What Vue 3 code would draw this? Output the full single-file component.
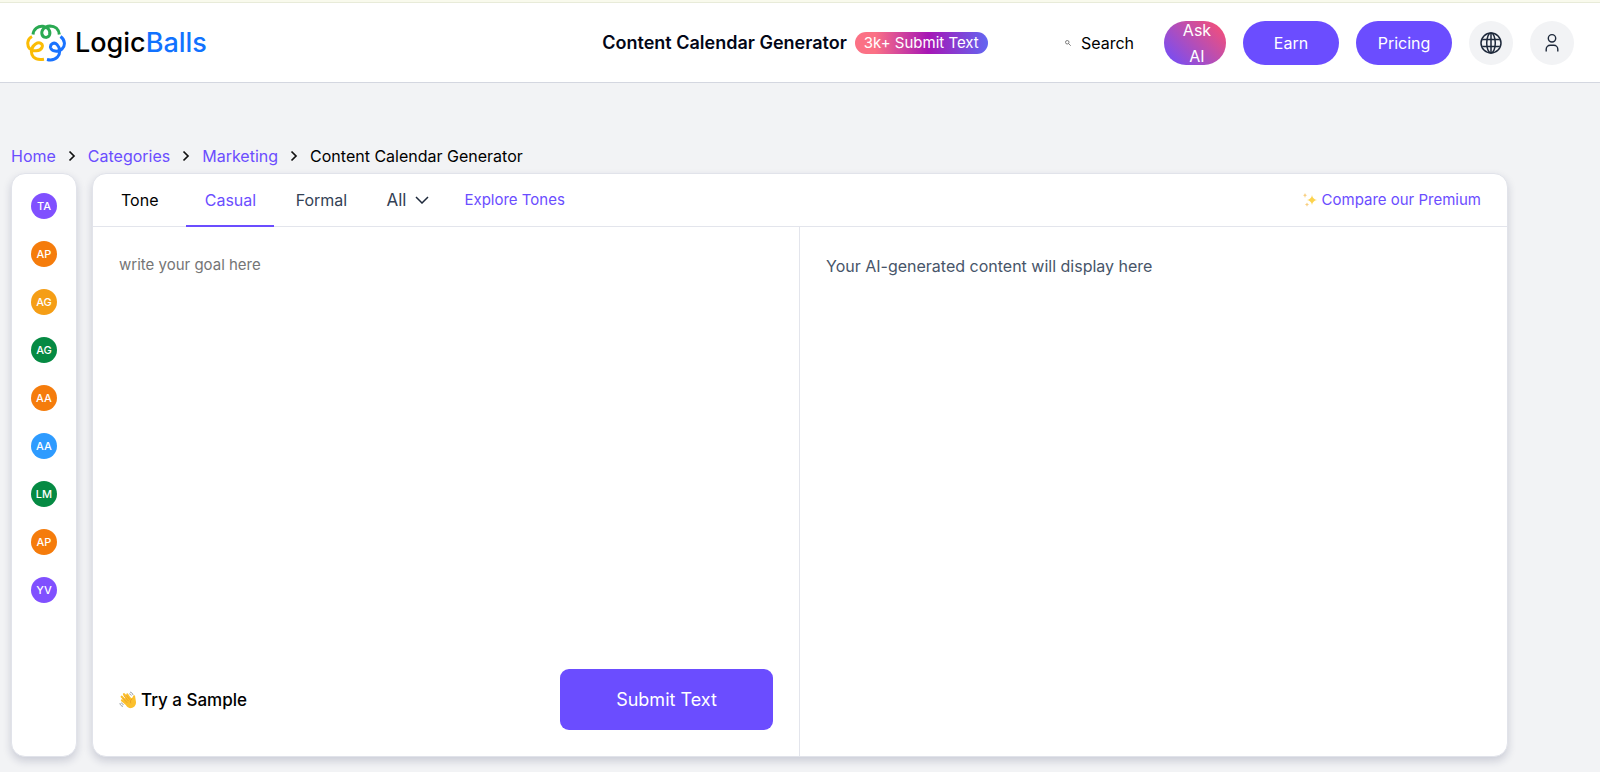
<script setup>
import { ref } from 'vue'

const crumbs = ['Home', 'Categories', 'Marketing']
const tools = [
  { code: 'TA', tint: 'violet' },
  { code: 'AP', tint: 'orange' },
  { code: 'AG', tint: 'amber' },
  { code: 'AG', tint: 'green' },
  { code: 'AA', tint: 'orange' },
  { code: 'AA', tint: 'blue' },
  { code: 'LM', tint: 'green' },
  { code: 'AP', tint: 'orange' },
  { code: 'YV', tint: 'violet' },
]
const tone = ref('Casual')
const goal = ref('')
</script>

<template>
  <div class="page">
    <div class="strip"></div>
    <header class="topbar">
      <a class="logo" href="#">
        <svg width="40" height="38" viewBox="0 0 40 38" fill="none" stroke-width="3" stroke-linecap="butt">
          <path stroke="#2aa952" d="M7 10.500C7.500 5 12 1.800 17 2.300C22 3 25 7 23.500 11C22 14.500 17 14 16 10.500C15 6.500 18 2.300 24 2C29 2 32.800 5 33.300 10.500" />
          <path stroke="#fbbc05" d="M6 12.500C1 15 .800 21 3.500 24.500C7 28 14 27.500 16 23.500C17.500 19.500 13.500 17.500 9.500 20C5 23 4 29 7.500 33C10 35.600 14 36 18 35.200" />
          <path stroke="#1a73ff" d="M34.500 12.500C39.300 16 39.500 22 36 25C32 28.500 25.500 27.500 24.500 23.500C24 20 28 17.500 31 20.500C34.500 24 34.500 30 31.500 33C29 35.700 25 36.500 21 35.500" />
        </svg>
        <span class="wordmark">Logic<span>Balls</span></span>
      </a>

      <div class="heading">
        <h1>Content Calendar Generator</h1>
        <span class="badge">3k+ Submit Text</span>
      </div>

      <nav class="actions">
        <button class="search" type="button">
          <svg width="6" height="6" viewBox="0 0 12 12" fill="none" stroke="#555" stroke-width="1.500">
            <circle cx="4.500" cy="4.500" r="3.500" />
            <path d="M7 7l4.500 4.500" />
          </svg>
          Search
        </button>
        <button class="pill ask" type="button">Ask AI</button>
        <button class="pill" type="button">Earn</button>
        <button class="pill" type="button">Pricing</button>
        <button class="round" type="button" aria-label="Language">
          <svg width="22" height="22" viewBox="0 0 22 22" fill="none" stroke="#1e293b" stroke-width="1.500">
            <circle cx="11" cy="11" r="10" />
            <ellipse cx="11" cy="11" rx="4.300" ry="10" />
            <path d="M11 1v20M2.200 7.500h17.600M2.200 14.500h17.600" />
          </svg>
        </button>
        <button class="round" type="button" aria-label="Account">
          <svg width="22" height="22" viewBox="0 0 22 22" fill="none" stroke="#1e293b" stroke-width="1.400">
            <circle cx="11" cy="6.300" r="3.700" />
            <path d="M5.200 19.500v-2.300a4 4 0 0 1 4-4h3.600a4 4 0 0 1 4 4v2.300" />
          </svg>
        </button>
      </nav>
    </header>

    <main class="content">
      <nav class="crumbs" aria-label="Breadcrumb">
        <template v-for="c in crumbs" :key="c">
          <a href="#">{{ c }}</a>
          <svg width="8" height="12" viewBox="0 0 8 12" fill="none" stroke="#111" stroke-width="1.700">
            <path d="M1.500 1.500L6 6l-4.500 4.500" />
          </svg>
        </template>
        <span>Content Calendar Generator</span>
      </nav>

      <div class="workspace">
        <aside class="card rail">
          <a v-for="(t, i) in tools" :key="i" href="#" :class="['avatar', t.tint]">{{ t.code }}</a>
        </aside>

        <section class="card panel">
          <div class="tones">
            <span class="label">Tone</span>
            <button
              v-for="t in ['Casual', 'Formal']"
              :key="t"
              type="button"
              :class="['tab', { active: tone === t }]"
              @click="tone = t"
            >{{ t }}</button>
            <label class="all">
              <select aria-label="All tones"><option>All</option></select>
              <svg width="14" height="8" viewBox="0 0 14 8" fill="none" stroke="#1e293b" stroke-width="1.500">
                <path d="M1 1l6 6 6-6" />
              </svg>
            </label>
            <a class="explore" href="#">Explore Tones</a>
            <a class="premium" href="#">
              <svg width="14" height="14" viewBox="0 0 14 14" fill="#fcd34d">
                <path d="M9 2q.6 4.200 5 5-4.400.8-5 5-.6-4.200-5-5 4.400-.8 5-5z" />
                <path fill="#f8cf80" d="M2 0q.3 2 2 2.300Q2.300 2.600 2 5 1.700 2.600 0 2.300 1.700 2 2 0zM4 9.500q.3 1.700 2 2-1.700.3-2 2.200-.3-1.900-2-2.200 1.700-.3 2-2z" />
              </svg>
              Compare our Premium
            </a>
          </div>

          <div class="panes">
            <form class="pane input" @submit.prevent>
              <textarea v-model="goal" aria-label="Goal" placeholder="write your goal here"></textarea>
              <div class="foot">
                <button class="sample" type="button">
                  <svg width="18" height="18" viewBox="0 0 18 18" fill="none" stroke-linecap="round">
                    <path fill="#fbc02d" d="M4.500 8.500L9 5.500l4 1.800 1.300-2.600c1-.9 2 0 1.900 1.200l.8 5.100c.2 3-1.800 5.600-4.600 6.100-2 .4-3.600-.5-4.700-1.800z" />
                    <path stroke="#fbc02d" stroke-width="2.200" d="M8.500 14L3 9.300M9 12L2.700 5.700M10.500 10L5 3.200M12 9L8.300 3.500" />
                    <path stroke="#e08f1c" stroke-width=".6" d="M8 11.500L4 7.300M9.300 9.800L5 5M10.700 8.500L7.200 4M13 8c-1.800 1.300-2 2.700-1.300 4" />
                    <path stroke="#8a9197" stroke-width=".9" d="M11.500 1.200c1.300.3 2.100 1.200 2.400 2.400M10.700 2.900c.8.200 1.200.6 1.500 1.300M1 12.500c.2 1.500 1.200 2.500 2.600 2.800M2.700 12c.2.800.7 1.300 1.500 1.500" />
                  </svg>
                  Try a Sample
                </button>
                <button class="submit" type="submit">Submit Text</button>
              </div>
            </form>
            <div class="pane output">Your AI-generated content will display here</div>
          </div>
        </section>
      </div>
    </main>
  </div>
</template>

<style>
body {
  margin: 0;
  background: #f2f3f5;
}
</style>

<style scoped>
.page,
.page * {
  box-sizing: border-box;
}
.page {
  min-height: 100vh;
  display: flex;
  flex-direction: column;
  background: #f2f3f5;
  color: #000;
  font-family: Inter, "Liberation Sans", sans-serif;
  font-size: 16px;
  line-height: 26px;
}
a {
  color: #6b4dff;
  text-decoration: none;
}
button,
select,
textarea {
  font: inherit;
  color: inherit;
  border: 0;
  background: none;
  padding: 0;
  margin: 0;
}
svg {
  flex: none;
  display: block;
}
.strip {
  height: 3px;
  background: #f9faed;
  border-bottom: 1px solid #e8ebd9;
}
.topbar {
  height: 80px;
  display: grid;
  grid-template-columns: 1fr auto 1fr;
  align-items: center;
  padding: 0 26px;
  background: #fff;
  border-bottom: 1px solid #d4d7e0;
}
.logo {
  display: flex;
  align-items: center;
  gap: 9px;
}
.wordmark {
  font-size: 27px;
  font-weight: 500;
  color: #000;
}
.wordmark span {
  color: #1172ff;
}
.heading {
  display: flex;
  align-items: center;
  gap: 8px;
  padding-right: 10px;
}
h1 {
  margin: 0;
  font-size: 18px;
  font-weight: 600;
  color: #020617;
}
.badge {
  padding: 0 9px;
  border-radius: 11px;
  font-size: 15px;
  line-height: 22px;
  color: #fff;
  background: linear-gradient(90deg, #fb7185 15%, #a616b5 55%, #6366f1);
}
.actions {
  display: flex;
  align-items: center;
  justify-content: flex-end;
  gap: 17px;
}
.search {
  display: flex;
  align-items: center;
  gap: 10px;
  margin-right: 13px;
}
.pill {
  width: 96px;
  height: 44px;
  border-radius: 22px;
  background: #6b4dff;
  color: #fff;
}
.ask {
  width: 62px;
  padding: 0 14px 0 18px;
  overflow: hidden;
  background: linear-gradient(45deg, #6b4dff, #ff4f6e);
  display: flex;
  align-items: center;
}
.round {
  width: 44px;
  height: 44px;
  border-radius: 50%;
  background: #f2f3f5;
  display: grid;
  place-items: center;
}
.content {
  flex: 1;
  display: flex;
  flex-direction: column;
  padding: 60px 92px 15px 11px;
}
.crumbs {
  display: flex;
  align-items: center;
  gap: 12px;
  margin-bottom: 4px;
}
.workspace {
  flex: 1;
  display: grid;
  grid-template-columns: 66px 1fr;
  gap: 15px;
}
.card {
  background: #fff;
  border: 1px solid #e1e3ea;
  border-radius: 14px;
  box-shadow: 0 4px 8px rgba(30, 35, 80, 0.18);
}
.rail {
  display: flex;
  flex-direction: column;
  align-items: center;
  gap: 22px;
  padding: 19px 0;
}
.avatar {
  width: 26px;
  height: 26px;
  border-radius: 50%;
  display: grid;
  place-items: center;
  font-size: 11px;
  font-weight: 500;
  color: #fff;
}
.violet {
  background: #8050ff;
}
.orange {
  background: #f57c0c;
}
.amber {
  background: #f59e16;
}
.green {
  background: #058a43;
}
.blue {
  background: #2e9bff;
}
.panel {
  display: flex;
  flex-direction: column;
}
.tones {
  height: 53px;
  display: flex;
  align-items: stretch;
  line-height: 52px;
  padding: 0 26px 0 28px;
  color: #334155;
  border-bottom: 1px solid #e3e5ec;
}
.label {
  color: #000;
  margin-right: 28px;
}
.tab {
  height: 53px;
  width: 88px;
  border-bottom: 2px solid transparent;
}
.tab.active {
  color: #6b4dff;
  border-color: #6b4dff;
}
.tab + .tab {
  width: 94px;
}
.all {
  display: flex;
  align-items: center;
  margin-left: 18px;
  font-size: 17px;
}
.all select {
  appearance: none;
  width: 29px;
}
.explore {
  margin-left: 35px;
  font-size: 15px;
}
.premium {
  margin-left: auto;
  display: flex;
  align-items: center;
  gap: 5px;
  font-size: 15px;
}
.panes {
  flex: 1;
  display: grid;
  grid-template-columns: 1fr 1fr;
}
.pane {
  padding: 26px;
}
.input {
  display: flex;
  flex-direction: column;
  border-right: 1px solid #e3e5ec;
}
textarea {
  flex: 1;
  resize: none;
  outline: none;
  font-size: 15px;
  line-height: 24px;
}
textarea::placeholder {
  color: #757575;
}
.foot {
  display: flex;
  align-items: center;
  justify-content: space-between;
}
.sample {
  display: flex;
  align-items: center;
  gap: 4px;
  font-size: 17px;
  font-weight: 500;
}
.submit {
  width: 213px;
  height: 61px;
  border-radius: 9px;
  background: #6b4dff;
  color: #fff;
  font-size: 18px;
}
.output {
  color: #475569;
}
</style>
